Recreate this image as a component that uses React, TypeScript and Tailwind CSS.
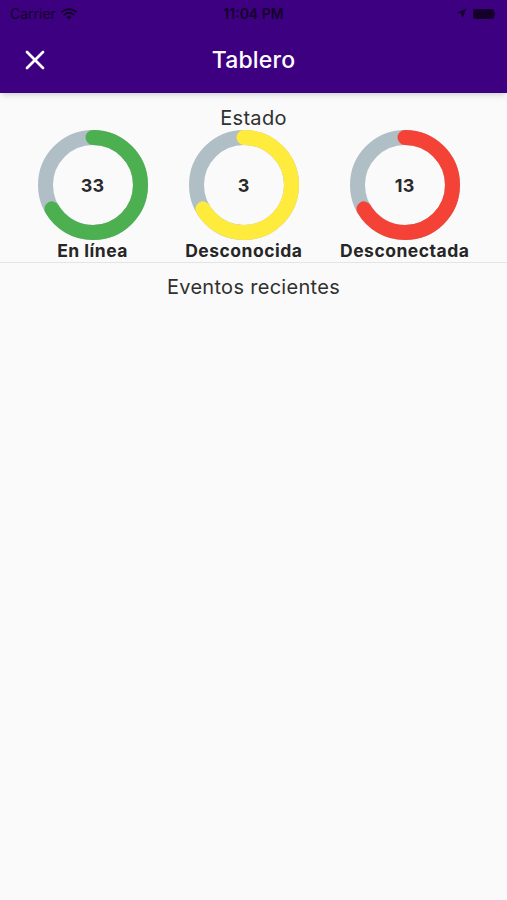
import { X } from "lucide-react";

const stats = [
  { value: 33, label: "En línea", color: "#4caf50" },
  { value: 3, label: "Desconocida", color: "#ffeb3b" },
  { value: 13, label: "Desconectada", color: "#f44336" },
];

function Ring({ value, color }: { value: number; color: string }) {
  // same sweep on every ring, like the reference
  const r = 47.5;
  const c = 2 * Math.PI * r;
  const frac = 0.665;
  return (
    <div className="relative w-[110px] h-[110px]">
      <svg width="110" height="110" viewBox="0 0 110 110" className="-rotate-90">
        <circle cx="55" cy="55" r={r} fill="none" stroke="#b0bec5" strokeWidth="15" />
        <circle
          cx="55"
          cy="55"
          r={r}
          fill="none"
          stroke={color}
          strokeWidth="15"
          strokeLinecap="round"
          strokeDasharray={`${c * frac} ${c}`}
        />
      </svg>
      <div className="absolute inset-0 flex items-center justify-center text-[18px] font-bold tracking-[0.3px] text-[#2a2a2a]">
        {value}
      </div>
    </div>
  );
}

function StatusBar() {
  return (
    <div className="h-[27px] flex items-center justify-between px-[10px] text-[#14002a] text-[14px]">
      <div className="flex items-center gap-[5px] w-[120px]">
        <span>Carrier</span>
        <svg width="16" height="12" viewBox="0 0 16 12">
          <path d="M8 11.5 L5.6 8.9 A3.6 3.6 0 0 1 10.4 8.9 Z" fill="currentColor" />
          <path d="M3.4 6.6 A6.8 6.8 0 0 1 12.6 6.6" stroke="currentColor" strokeWidth="1.9" fill="none" strokeLinecap="round" />
          <path d="M1 3.9 A10.2 10.2 0 0 1 15 3.9" stroke="currentColor" strokeWidth="1.9" fill="none" strokeLinecap="round" />
        </svg>
      </div>
      <span className="font-semibold">11:04 PM</span>
      <div className="flex items-center justify-end gap-[6px] w-[120px] pr-[2px]">
        <svg width="11" height="11" viewBox="0 0 11 11">
          <path d="M10.5 0.5 L0.8 4.8 L5.4 5.6 L6.2 10.2 Z" fill="currentColor" />
        </svg>
        <div className="flex items-center">
          <div className="w-[21px] h-[10px] rounded-[2px] bg-[#14002a]" />
          <div className="w-[1.5px] h-[4px] bg-[#14002a] rounded-r-sm" />
        </div>
      </div>
    </div>
  );
}

export default function App() {
  return (
    <div className="w-[507px] h-[900px] bg-[#fafafa] font-['Inter','Roboto',sans-serif] text-[#303030] overflow-hidden">
      <div className="bg-[#3d0080] shadow-md relative z-10">
        <StatusBar />
        <div className="h-[66px] flex items-center relative">
          <div className="absolute left-[19px] top-[17px]">
            <X size={32} strokeWidth={2} color="white" />
          </div>
          <h1 className="w-full text-center text-white text-[23px] font-medium tracking-[0.2px]">Tablero</h1>
        </div>
      </div>

      <div className="pt-[13px] text-center text-[20px] leading-6 tracking-[0.3px]">Estado</div>
      <div className="flex justify-evenly">
        {stats.map((s) => (
          <div key={s.label} className="flex flex-col items-center">
            <Ring value={s.value} color={s.color} />
            <div className="text-[17.5px] font-bold leading-[22px] tracking-[0.5px] text-[#262626]">{s.label}</div>
          </div>
        ))}
      </div>
      <div className="h-px bg-[#e4e4e4]" />
      <div className="pt-[12px] text-center text-[20px] leading-6 tracking-[0.3px]">Eventos recientes</div>
    </div>
  );
}
